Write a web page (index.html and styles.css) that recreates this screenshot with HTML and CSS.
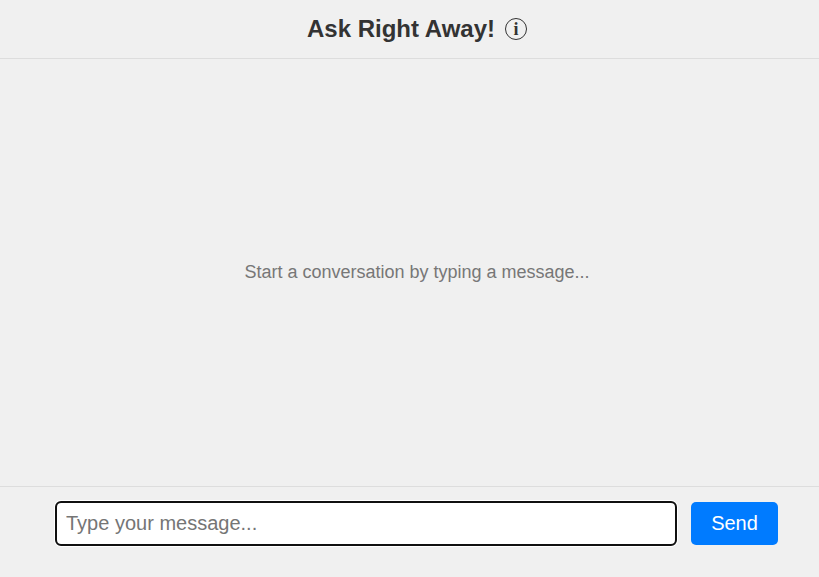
FILE: index.html
```html
<!DOCTYPE html>
<html lang="en">
<head>
<meta charset="utf-8">
<title>Ask Right Away!</title>
<link rel="stylesheet" href="styles.css">
</head>
<body>
<div class="app">
  <header class="header">
    <h1 class="title">Ask Right Away!</h1>
    <span class="info">i</span>
  </header>
  <main class="messages">
    <p class="empty">Start a conversation by typing a message...</p>
  </main>
  <form class="composer">
    <input class="field" type="text" placeholder="Type your message...">
    <button class="send" type="button">Send</button>
  </form>
</div>
</body>
</html>
```
FILE: styles.css
```css
* { box-sizing: border-box; }
html, body { margin: 0; height: 100%; }
body { background: #f0f0f0; font-family: "Liberation Sans", Arial, sans-serif; }
.app { height: 577px; display: flex; flex-direction: column; }
.header {
  height: 59px;
  padding-left: 15px;
  border-bottom: 1px solid #ddd;
  display: flex;
  align-items: center;
  justify-content: center;
  gap: 10px;
}
.title { margin: 0; font-size: 24px; font-weight: 700; color: #333; }
.info {
  width: 22px;
  height: 22px;
  border: 1.5px solid #333;
  border-radius: 50%;
  display: flex;
  align-items: center;
  justify-content: center;
  font-family: "Liberation Serif", serif;
  font-size: 18px;
  font-weight: 700;
  color: #333;
}
.messages {
  flex: 1;
  display: flex;
  align-items: center;
  justify-content: center;
  padding-left: 15px;
}
.empty { margin: 0; font-size: 18px; color: #777; }
.composer {
  height: 91px;
  border-top: 1px solid #ddd;
  padding: 15px 41px 31px 56px;
  display: flex;
  gap: 15px;
}
.field {
  flex: 1;
  min-width: 0;
  height: 43px;
  padding: 9px;
  border: 1px solid #ccc;
  border-radius: 5px;
  background: #fff;
  font-family: inherit;
  font-size: 20px;
  outline: 2px solid #101010;
  outline-offset: -1px;
  box-shadow: 0 0 0 2px #fff;
}
.field::placeholder { color: #757575; }
.send {
  width: 87px;
  height: 43px;
  border: 0;
  border-radius: 5px;
  background: #007bff;
  color: #fff;
  font-family: inherit;
  font-size: 20px;
}
```
